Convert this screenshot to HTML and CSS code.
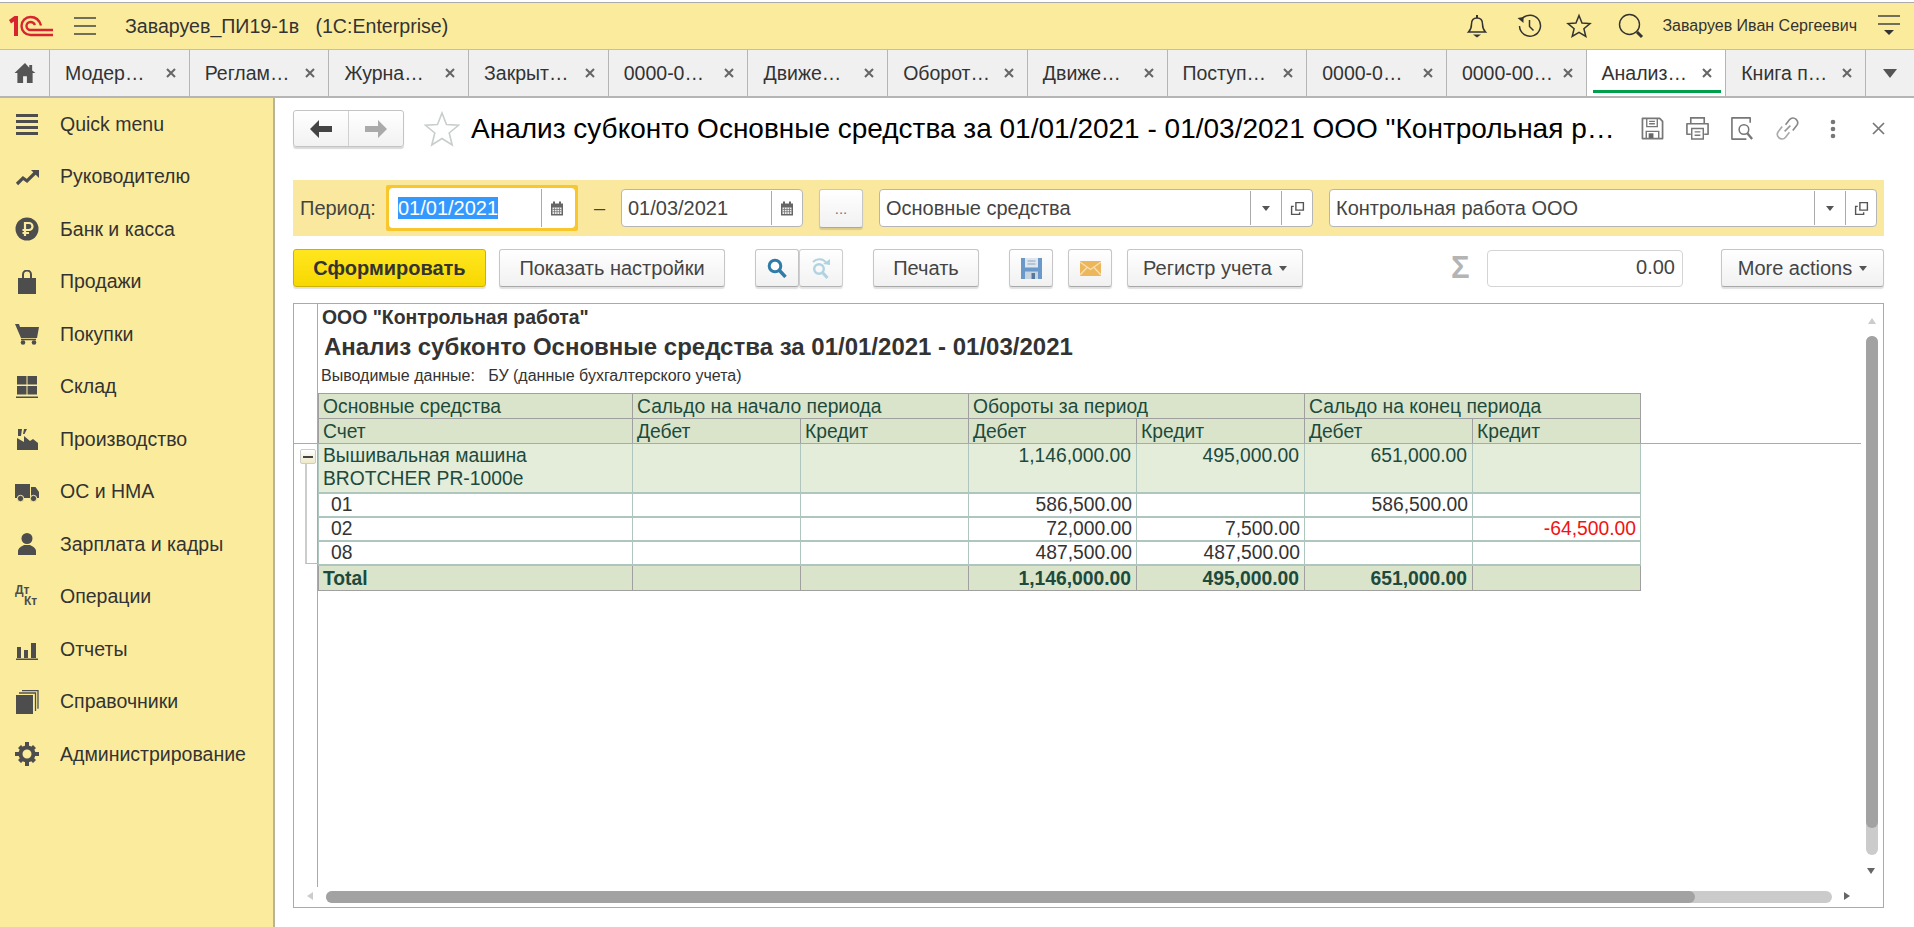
FILE: index.html
```html
<!DOCTYPE html>
<html lang="en">
<head>
  <meta charset="UTF-8" />
  <title>Анализ субконто</title>
  <link rel="stylesheet" href="styles.css">
</head>
<body>

<svg class="defs" width="0" height="0">
  <symbol id="i-cal" viewBox="0 0 14 16">
    <path d="M1 3h12v12H1z" fill="#666"/>
    <path d="M3 1h2v3H3zM9 1h2v3H9z" fill="#666"/>
    <path d="M2.5 7h9v6.5h-9z" fill="#eee"/>
    <path d="M4.5 7v6.5M7 7v6.5M9.5 7v6.5M2.5 9h9M2.5 11.2h9" stroke="#777" stroke-width=".8" fill="none"/>
  </symbol>
  <symbol id="i-open" viewBox="0 0 14 14">
    <path d="M5.5 1.5h7v7h-7z" fill="none" stroke="#555" stroke-width="1.3"/>
    <path d="M3.5 5H1.5v7.5H9V10.5" fill="none" stroke="#555" stroke-width="1.3"/>
  </symbol>
  <symbol id="i-x" viewBox="0 0 10 10">
    <path d="M1 1l8 8M9 1l-8 8" stroke="#666" stroke-width="2" fill="none"/>
  </symbol>
</svg>

<header class="topbar">
  <svg class="logo" width="44" height="22" viewBox="0 0 44 22">
    <path d="M0 5l5.500-4H9v20H5V6.500L2 8.500z" fill="#d9232e"/>
    <path d="M44 20H21.500a9 9 0 0 1 0-18c5.500 0 9 3.500 10.500 8.500" fill="none" stroke="#d9232e" stroke-width="2.400"/>
    <path d="M44 15H21.500a4 4 0 0 1 0-8c2 0 3.500 1 4.500 3" fill="none" stroke="#d9232e" stroke-width="2.400"/>
  </svg>
  <svg class="burger" width="22" height="18" viewBox="0 0 22 18">
    <path d="M0 1h22M0 9h22M0 17h22" stroke="#444" stroke-width="1.4" fill="none"/>
  </svg>
  <div class="app-title">Заваруев_ПИ19-1в&nbsp;&nbsp; (1C:Enterprise)</div>
  <div class="top-icons">
    <svg class="t-bell" width="24" height="26" viewBox="0 0 24 26">
      <path d="M3.500 19c2.500-2.500 3-4 3-8 0-3.500 2-6 5.500-6s5.500 2.500 5.500 6c0 4 .5 5.500 3 8z" fill="none" stroke="#333" stroke-width="1.500"/>
      <path d="M12 2v3" stroke="#333" stroke-width="2"/>
      <path d="M8 21.500h8l-4 3z" fill="#333"/>
    </svg>
    <svg class="t-hist" width="26" height="26" viewBox="0 0 26 26">
      <path d="M5.500 6.500a10.500 10.500 0 1 1-2 6.500" fill="none" stroke="#333" stroke-width="1.500"/>
      <path d="M1.500 5l6-1v6z" fill="#333"/>
      <path d="M13.500 7v6.500l4 4" fill="none" stroke="#333" stroke-width="1.500"/>
    </svg>
    <svg class="t-star" width="26" height="26" viewBox="0 0 26 26">
      <path d="M13 2.500l3 7.500 8 .6-6.100 5.100 1.900 7.800L13 19.300l-6.800 4.200 1.900-7.800L2 10.600l8-.6z" fill="none" stroke="#333" stroke-width="1.500"/>
    </svg>
    <svg class="t-search" width="26" height="26" viewBox="0 0 26 26">
      <circle cx="11.500" cy="11.500" r="10" fill="none" stroke="#333" stroke-width="1.400"/>
      <path d="M19 19l5 5" stroke="#333" stroke-width="3"/>
    </svg>
    <div class="user-name">Заваруев Иван Сергеевич</div>
    <svg class="t-menu" width="22" height="22" viewBox="0 0 22 22">
      <path d="M0 1h22M0 9h22" stroke="#444" stroke-width="1.4" fill="none"/>
      <path d="M6 15h10l-5 5z" fill="#333"/>
    </svg>
  </div>
</header>

<nav class="tabs">
  <div class="tab-home">
    <svg width="22" height="20" viewBox="0 0 22 21"><path d="M11 0L0 10.500h3V21h6v-7h4v7h6V10.500h3L18.500 8V2h-3v3z" fill="#555"/></svg>
  </div>
  <div class="tab"><span>Модер…</span><svg><use href="#i-x"/></svg></div>
  <div class="tab"><span>Реглам…</span><svg><use href="#i-x"/></svg></div>
  <div class="tab"><span>Журна…</span><svg><use href="#i-x"/></svg></div>
  <div class="tab"><span>Закрыт…</span><svg><use href="#i-x"/></svg></div>
  <div class="tab"><span>0000-0…</span><svg><use href="#i-x"/></svg></div>
  <div class="tab"><span>Движе…</span><svg><use href="#i-x"/></svg></div>
  <div class="tab"><span>Оборот…</span><svg><use href="#i-x"/></svg></div>
  <div class="tab"><span>Движе…</span><svg><use href="#i-x"/></svg></div>
  <div class="tab"><span>Поступ…</span><svg><use href="#i-x"/></svg></div>
  <div class="tab"><span>0000-0…</span><svg><use href="#i-x"/></svg></div>
  <div class="tab"><span>0000-00…</span><svg><use href="#i-x"/></svg></div>
  <div class="tab active"><span>Анализ…</span><svg><use href="#i-x"/></svg></div>
  <div class="tab"><span>Книга п…</span><svg><use href="#i-x"/></svg></div>
  <div class="tab-more"><svg width="14" height="9" viewBox="0 0 14 9"><path d="M0 0h14L7 9z" fill="#555"/></svg></div>
</nav>

<div class="main">
  <aside class="sidebar">
    <div class="side-item">
      <svg viewBox="0 0 24 24"><path d="M1 2h22v3H1zM1 8h22v3H1zM1 14h22v3H1zM1 20h22v3H1z" fill="#4d4d4d"/></svg>
      <span>Quick menu</span>
    </div>
    <div class="side-item">
      <svg viewBox="0 0 24 24"><path d="M2 19l6-6 4 3 8-8" fill="none" stroke="#4d4d4d" stroke-width="3.2"/><path d="M16 5h8v8z" fill="#4d4d4d"/></svg>
      <span>Руководителю</span>
    </div>
    <div class="side-item">
      <svg viewBox="0 0 24 24"><circle cx="12" cy="12" r="11.5" fill="#4d4d4d"/><path d="M10 19V6h4a3.500 3.500 0 0 1 0 7H7.500M7.500 16H14" fill="none" stroke="#fbec9d" stroke-width="2.200"/></svg>
      <span>Банк и касса</span>
    </div>
    <div class="side-item">
      <svg viewBox="0 0 24 24"><path d="M3 8h18v16H3z" fill="#4d4d4d"/><path d="M8 11V4.500a4 4 0 0 1 8 0V11" fill="none" stroke="#4d4d4d" stroke-width="2"/></svg>
      <span>Продажи</span>
    </div>
    <div class="side-item">
      <svg viewBox="0 0 24 24"><path d="M0 2h4l1 3h19l-2 11H6z" fill="#4d4d4d"/><circle cx="8" cy="20.500" r="2.300" fill="#4d4d4d"/><circle cx="19" cy="20.500" r="2.300" fill="#4d4d4d"/><path d="M6 17.500h15" stroke="#4d4d4d" stroke-width="1.500"/></svg>
      <span>Покупки</span>
    </div>
    <div class="side-item">
      <svg viewBox="0 0 24 24"><path d="M2 1h9.500v8.500H2zM12.500 1H22v8.500h-9.500zM2 11h9.500v8.500H2zM12.500 11H22v8.500h-9.500zM1 21.500h22V23H1z" fill="#4d4d4d"/></svg>
      <span>Склад</span>
    </div>
    <div class="side-item">
      <svg viewBox="0 0 24 24"><path d="M2 23V11l7 4V9l6 5 3-2 5 4v7zM3 2h4l-1 7H3zM9 2h3L9.500 7H8z" fill="#4d4d4d"/></svg>
      <span>Производство</span>
    </div>
    <div class="side-item">
      <svg viewBox="0 0 24 24"><path d="M0 4h15v14H0zM16 7h4.500l3.500 5v6h-8z" fill="#4d4d4d"/><circle cx="5.500" cy="18.500" r="3.200" fill="#4d4d4d" stroke="#fbec9d"/><circle cx="18.500" cy="18.500" r="3.200" fill="#4d4d4d" stroke="#fbec9d"/></svg>
      <span>ОС и НМА</span>
    </div>
    <div class="side-item">
      <svg viewBox="0 0 24 24"><circle cx="12" cy="6.500" r="5.500" fill="#4d4d4d"/><path d="M3 23v-4c0-3 4-5 6-6h6c2 1 6 3 6 6v4z" fill="#4d4d4d"/></svg>
      <span>Зарплата и кадры</span>
    </div>
    <div class="side-item">
      <div class="dt-kt"><b>Дт</b><b class="kt">Кт</b></div>
      <span>Операции</span>
    </div>
    <div class="side-item">
      <svg viewBox="0 0 24 24"><path d="M2 10h4v11H2zM9 13h4v8H9zM16 6h5v15h-5zM1 21.500h22V23H1z" fill="#4d4d4d"/></svg>
      <span>Отчеты</span>
    </div>
    <div class="side-item">
      <svg viewBox="0 0 24 24"><path d="M1 5h17v19H1z" fill="#4d4d4d"/><path d="M4 3h16.500v18M7 .7h16v18" fill="none" stroke="#4d4d4d" stroke-width="1.300"/></svg>
      <span>Справочники</span>
    </div>
    <div class="side-item">
      <svg viewBox="0 0 24 24"><circle cx="12" cy="12" r="6.500" fill="none" stroke="#4d4d4d" stroke-width="4"/><path d="M10 0h4v4h-4zM10 20h4v4h-4zM0 10h4v4H0zM20 10h4v4h-4zM3 6l3-3 3 3-3 3zM15 18l3-3 3 3-3 3zM15 6l3-3 3 3-3 3zM3 18l3-3 3 3-3 3z" fill="#4d4d4d"/></svg>
      <span>Администрирование</span>
    </div>
  </aside>

  <main class="content">
    <div class="form-head">
      <div class="nav-group">
        <div class="nav-btn">
          <svg width="22" height="18" viewBox="0 0 22 18"><path d="M9 0v6h13v6H9v6L0 9z" fill="#444"/></svg>
        </div>
        <div class="nav-btn">
          <svg width="22" height="18" viewBox="0 0 22 18"><path d="M13 0v6H0v6h13v6l9-9z" fill="#aaa"/></svg>
        </div>
      </div>
      <svg class="fav" width="36" height="36" viewBox="0 0 36 36">
        <path d="M18 2l4.500 11.500 12 .8-9.300 7.700 3 12L18 27.500 7.800 34l3-12-9.300-7.700 12-.8z" fill="#fff" stroke="#c8cdcd" stroke-width="1.600"/>
      </svg>
      <h1 class="form-title">Анализ субконто Основные средства за 01/01/2021 - 01/03/2021 ООО "Контрольная р…</h1>
      <div class="head-icons">
        <svg width="23" height="23" viewBox="0 0 24 24"><path d="M1.500 1.500h18l3 3v18h-21z" fill="none" stroke="#777" stroke-width="1.800" stroke-linejoin="round"/><path d="M6 2v8h11V2M8.500 4.500h6M8.500 7h6" fill="none" stroke="#777" stroke-width="1.400"/><path d="M5.500 22v-7h13v7" fill="none" stroke="#777" stroke-width="1.500"/><path d="M8 17h5v5H8z" fill="#666"/></svg>
        <svg width="25" height="25" viewBox="0 0 26 26"><path d="M6 8V2h14v6" fill="none" stroke="#777" stroke-width="1.700"/><path d="M6 19H2V8h22v11h-4" fill="none" stroke="#777" stroke-width="1.700" stroke-linejoin="round"/><path d="M7 13h12v11H7zM10 16.500h6M10 20h6" fill="none" stroke="#777" stroke-width="1.500"/></svg>
        <svg width="25" height="25" viewBox="0 0 26 26"><path d="M21 7V2H2v22h15" fill="none" stroke="#777" stroke-width="1.700" stroke-linejoin="round"/><circle cx="14.500" cy="14" r="5" fill="none" stroke="#777" stroke-width="1.600"/><path d="M18 18l5 6" stroke="#777" stroke-width="2.400"/></svg>
        <svg width="25" height="25" viewBox="0 0 26 26"><path d="M11 9l4-5c2-2.500 5-2.500 7-.5s2 4.500.5 6.500l-4 5" fill="none" stroke="#888" stroke-width="1.700"/><path d="M15 17l-4 5c-2 2.500-5 2.500-7 .5s-2-4.500-.5-6.500l4-5" fill="none" stroke="#aaa" stroke-width="1.700"/><path d="M10 16l6-6" stroke="#999" stroke-width="1.700"/></svg>
        <svg width="6" height="20" viewBox="0 0 6 20"><circle cx="3" cy="3" r="2.300" fill="#777"/><circle cx="3" cy="10" r="2.300" fill="#777"/><circle cx="3" cy="17" r="2.300" fill="#777"/></svg>
        <svg width="13" height="13" viewBox="0 0 13 13"><path d="M1 1l11 11M12 1L1 12" stroke="#777" stroke-width="1.700" fill="none"/></svg>
      </div>
    </div>

    <div class="band">
      <label class="period-label">Период:</label>
      <div class="focus-ring">
        <div class="field in-focus">
          <div class="field-text"><span class="selected">01/01/2021</span></div>
          <div class="field-btn cal"><svg width="14" height="17"><use href="#i-cal"/></svg></div>
        </div>
      </div>
      <span class="dash">–</span>
      <div class="field date-to">
        <div class="field-text">01/03/2021</div>
        <div class="field-btn cal"><svg width="14" height="17"><use href="#i-cal"/></svg></div>
      </div>
      <div class="btn dots">...</div>
      <div class="field sub-field">
        <div class="field-text">Основные средства</div>
        <div class="field-btn"><i class="caret"></i></div>
        <div class="field-btn open"><svg width="15" height="15"><use href="#i-open"/></svg></div>
      </div>
      <div class="field org-field">
        <div class="field-text">Контрольная работа ООО</div>
        <div class="field-btn"><i class="caret"></i></div>
        <div class="field-btn open"><svg width="15" height="15"><use href="#i-open"/></svg></div>
      </div>
    </div>

    <div class="toolbar">
      <div class="btn btn-primary">Сформировать</div>
      <div class="btn w-settings">Показать настройки</div>
      <div class="btn icon-btn m-search">
        <svg width="20" height="20" viewBox="0 0 20 20"><circle cx="8" cy="8" r="5.800" fill="#fff" stroke="#2f7ca8" stroke-width="3"/><path d="M12.500 12.500l6 6.500" stroke="#2f7ca8" stroke-width="3.400"/></svg>
      </div>
      <div class="btn icon-btn pale">
        <svg width="22" height="22" viewBox="0 0 22 22"><circle cx="9" cy="12" r="4.800" fill="none" stroke="#a3ccdc" stroke-width="2.400"/><path d="M12.500 15.500l5 5.500" stroke="#a3ccdc" stroke-width="3"/><path d="M3 5c4-4 10-3.500 13 .5" fill="none" stroke="#a3ccdc" stroke-width="2"/><path d="M13 7l7 1 0-6z" fill="#a3ccdc"/></svg>
      </div>
      <div class="btn w-print">Печать</div>
      <div class="btn icon-btn m-save">
        <svg width="21" height="21" viewBox="0 0 21 21"><path d="M0 0h21v21H0z" fill="#6a98c8"/><path d="M4 0h13v9.500H4z" fill="#dfe6ee"/><path d="M6.500 3h8M6.500 6h8" stroke="#8aa4bf"/><path d="M4 13.500h13V21H4z" fill="#c8d4e0"/><path d="M10.500 15h3.500v6h-3.500z" fill="#56789c"/></svg>
      </div>
      <div class="btn icon-btn m-mail">
        <svg width="21" height="15" viewBox="0 0 21 15"><path d="M0 0h21v15H0z" fill="#ecb65c"/><path d="M0 1l10.500 7.500L21 1M0 14l7.500-8M21 14l-7.500-8" fill="none" stroke="#f9e0ae" stroke-width="1.300"/></svg>
      </div>
      <div class="btn w-reg">Регистр учета <i class="caret"></i></div>
      <div class="sigma">Σ</div>
      <div class="sum-field">0.00</div>
      <div class="btn w-more">More actions <i class="caret"></i></div>
    </div>

    <section class="report">
      <div class="sheet">
        <div class="rep-org">ООО "Контрольная работа"</div>
        <div class="rep-title">Анализ субконто Основные средства за 01/01/2021 - 01/03/2021</div>
        <div class="rep-note">Выводимые данные:&nbsp;&nbsp; БУ (данные бухгалтерского учета)</div>
        <table class="rep-table">
          <colgroup>
            <col class="c-first"><col class="c-num"><col class="c-num"><col class="c-num"><col class="c-num"><col class="c-num"><col class="c-num">
          </colgroup>
          <tr class="head h1">
            <td>Основные средства</td>
            <td colspan="2">Сальдо на начало периода</td>
            <td colspan="2">Обороты за период</td>
            <td colspan="2">Сальдо на конец периода</td>
          </tr>
          <tr class="head h2">
            <td>Счет</td><td>Дебет</td><td>Кредит</td><td>Дебет</td><td>Кредит</td><td>Дебет</td><td>Кредит</td>
          </tr>
          <tr class="group">
            <td>Вышивальная машина<br>BROTCHER PR-1000e</td>
            <td></td><td></td>
            <td class="n">1,146,000.00</td><td class="n">495,000.00</td><td class="n">651,000.00</td><td></td>
          </tr>
          <tr class="row">
            <td class="acc">01</td><td></td><td></td>
            <td class="n">586,500.00</td><td></td><td class="n">586,500.00</td><td></td>
          </tr>
          <tr class="row">
            <td class="acc">02</td><td></td><td></td>
            <td class="n">72,000.00</td><td class="n">7,500.00</td><td></td><td class="n neg">-64,500.00</td>
          </tr>
          <tr class="row">
            <td class="acc">08</td><td></td><td></td>
            <td class="n">487,500.00</td><td class="n">487,500.00</td><td></td><td></td>
          </tr>
          <tr class="total">
            <td>Total</td><td></td><td></td>
            <td class="n">1,146,000.00</td><td class="n">495,000.00</td><td class="n">651,000.00</td><td></td>
          </tr>
        </table>
      </div>

      <div class="freeze-line"></div>
      <div class="tree-line"></div>
      <div class="tree-toggle"></div>

      <i class="arrow up"></i>
      <div class="vtrack"><div class="vthumb"></div></div>
      <i class="arrow down"></i>
      <i class="arrow left"></i>
      <div class="htrack"><div class="hthumb"></div></div>
      <i class="arrow right"></i>
    </section>
  </main>
</div>

</body>
</html>
```

FILE: styles.css
```css
:root {
  --yellow: #fbec9d;
  --band: #fae89f;
  --text: #333;
  --green-text: #1d4a3c;
}
* {
  margin: 0;
  padding: 0;
  box-sizing: border-box;
}
html, body {
  height: 927px;
  overflow: hidden;
}
body {
  display: flex;
  flex-direction: column;
  padding-top: 2px;
  background: #fff;
  color: var(--text);
  font-family: "Liberation Sans", Arial, sans-serif;
  font-size: 20px;
}
.defs {
  position: absolute;
}

/* top bar */
.topbar {
  display: flex;
  align-items: center;
  height: 48px;
  flex: none;
  background: var(--yellow);
  border-top: 1px solid #aaa;
  border-bottom: 1px solid #c9c28d;
}
.logo {
  margin-left: 9px;
}
.burger {
  margin-left: 21px;
}
.app-title {
  margin-left: 29px;
  font-size: 19.6px;
}
.top-icons {
  display: flex;
  align-items: center;
  margin-left: auto;
  padding-right: 14px;
}
.t-bell { margin-right: 27px; }
.t-hist { margin-right: 24px; }
.t-star { margin-right: 26px; }
.t-search { margin-right: 18px; }
.user-name {
  font-size: 16px;
  margin-right: 21px;
}

/* tabs */
.tabs {
  display: flex;
  flex: none;
  height: 48px;
  background: #f0f0f0;
  border-bottom: 2px solid #b5b5b5;
}
.tab-home {
  width: 50px;
  display: flex;
  align-items: center;
  justify-content: center;
  border-right: 1px solid #b5b5b5;
}
.tab {
  position: relative;
  width: 139.7px;
  display: flex;
  align-items: center;
  padding-left: 15px;
  border-right: 1px solid #b5b5b5;
  font-size: 19.5px;
  white-space: nowrap;
}
.tab svg {
  position: absolute;
  right: 13px;
  top: 18px;
  width: 10px;
  height: 10px;
}
.tab.active {
  background: #fff;
}
.tab.active::after {
  content: "";
  position: absolute;
  left: 6px;
  right: 4px;
  bottom: 3px;
  height: 3px;
  background: #00a04a;
}
.tab-more {
  flex: 1;
  display: flex;
  align-items: center;
  justify-content: center;
}

/* layout */
.main {
  display: flex;
  flex: 1;
  min-height: 0;
}
.sidebar {
  width: 275px;
  flex: none;
  background: var(--yellow);
  border-right: 2px solid #b8b49a;
}
.side-item {
  display: flex;
  align-items: center;
  height: 52.5px;
  padding-left: 15px;
  font-size: 19.5px;
}
.side-item svg,
.dt-kt {
  width: 24px;
  height: 24px;
  flex: none;
  margin-right: 21px;
}
.dt-kt {
  display: flex;
  flex-direction: column;
  font-size: 12px;
  line-height: 11px;
  color: #4d4d4d;
}
.dt-kt .kt {
  margin-left: 9px;
}
.content {
  flex: 1;
  padding: 12px 30px 0 18px;
  min-width: 0;
}

/* form header */
.form-head {
  display: flex;
  align-items: center;
  height: 37px;
}
.nav-group {
  display: flex;
  width: 111px;
  height: 37px;
  flex: none;
  border: 1px solid #c4c4c4;
  border-radius: 3px;
  background: linear-gradient(#fff, #f2f2f2);
  box-shadow: 0 2px 1px rgba(0, 0, 0, .15);
}
.nav-btn {
  flex: 1;
  display: flex;
  align-items: center;
  justify-content: center;
}
.nav-btn + .nav-btn {
  border-left: 1px solid #d0d0d0;
}
.fav {
  margin-left: 20px;
  flex: none;
}
.form-title {
  margin-left: 11px;
  font-size: 28px;
  font-weight: normal;
  color: #000;
  white-space: nowrap;
}
.head-icons {
  display: grid;
  grid-template-columns: repeat(6, 45.2px);
  justify-items: center;
  align-items: center;
  margin-left: auto;
  margin-right: -16.6px;
  flex: none;
}

/* period band */
.band {
  display: flex;
  align-items: center;
  height: 56px;
  margin-top: 33px;
  padding-left: 7px;
  background: var(--band);
}
.period-label {
  width: 86px;
  font-size: 20px;
  color: #444;
}
.focus-ring {
  width: 192px;
  height: 46px;
  padding: 3px;
  background: #f8c72e;
  border-radius: 2px;
}
.field {
  display: flex;
  align-items: center;
  height: 38px;
  padding: 1px 0;
  background: #fff;
  border: 1px solid #b5b5b5;
  border-radius: 4px;
  font-size: 20px;
  color: #444;
}
.in-focus {
  height: 40px;
  border: none;
}
.field-text {
  flex: 1;
  padding-left: 6px;
  white-space: nowrap;
}
.in-focus .field-text {
  padding-left: 9px;
}
.selected {
  background: #3399ff;
  color: #fff;
}
.field-btn {
  display: flex;
  align-items: center;
  justify-content: center;
  width: 31px;
  height: 100%;
  border-left: 1px solid #aaa;
}
.in-focus .field-btn {
  width: 34px;
  padding-right: 4px;
}
.dash {
  width: 43px;
  text-align: center;
  color: #444;
}
.date-to { width: 182px; }
.sub-field { width: 434px; margin-left: 16px; }
.org-field { width: 548px; margin-left: 16px; }
.caret {
  display: inline-block;
  width: 0;
  height: 0;
  border-left: 4px solid transparent;
  border-right: 4px solid transparent;
  border-top: 5px solid #555;
}

/* buttons */
.btn {
  display: flex;
  align-items: center;
  justify-content: center;
  height: 38px;
  flex: none;
  background: linear-gradient(#fff, #f1f1f1);
  border: 1px solid #c6c6c6;
  border-bottom-color: #a8a8a8;
  border-radius: 3px;
  box-shadow: 0 2px 1px rgba(0, 0, 0, .12);
  font-size: 20px;
  color: #444;
}
.dots {
  width: 44px;
  height: 39px;
  margin-left: 16px;
  font-size: 15px;
  color: #777;
}
.toolbar {
  display: flex;
  align-items: center;
  height: 38px;
  margin-top: 13px;
}
.btn-primary {
  width: 193px;
  background: linear-gradient(#ffe61f, #f7d800);
  border-color: #cdb300;
  font-weight: bold;
  color: #333;
}
.w-settings { width: 226px; margin-left: 13px; }
.icon-btn { width: 44px; }
.m-search { margin-left: 30px; }
.pale { opacity: .85; }
.w-print { width: 106px; margin-left: 30px; }
.m-save { margin-left: 30px; }
.m-mail { margin-left: 15px; }
.w-reg { width: 176px; margin-left: 15px; }
.w-reg .caret, .w-more .caret { margin-left: 7px; }
.sigma {
  margin-left: 148px;
  width: 36px;
  font-size: 31px;
  color: #b4b4b4;
  font-weight: bold;
}
.sum-field {
  width: 196px;
  height: 37px;
  line-height: 33px;
  text-align: right;
  padding-right: 7px;
  border: 1px solid #d4d4d4;
  border-radius: 4px;
  font-size: 20px;
  color: #444;
}
.w-more { width: 163px; margin-left: 38px; }

/* report */
.report {
  position: relative;
  height: 605px;
  margin-top: 16px;
  border: 1px solid #aaa;
}
.sheet {
  height: 583px;
  margin-left: 23px;
  border-left: 1px solid #aaa;
}
.rep-org {
  height: 26px;
  line-height: 26px;
  padding-left: 4px;
  font-size: 19.4px;
  font-weight: bold;
}
.rep-title {
  height: 33px;
  line-height: 33px;
  padding-left: 6px;
  font-size: 24px;
  font-weight: bold;
}
.rep-note {
  height: 30px;
  line-height: 25px;
  padding-left: 3px;
  font-size: 16px;
}
.rep-table {
  border-collapse: collapse;
  table-layout: fixed;
  width: 1322px;
  color: var(--green-text);
  font-size: 19.3px;
  line-height: 22px;
}
.c-first { width: 314px; }
.c-num { width: 168px; }
.rep-table td {
  padding: 0 5px 0 4px;
  border: 1px solid #aec6be;
  vertical-align: top;
  white-space: nowrap;
}
.head td, .total td {
  padding-top: 2px;
  background: #d9e4cb;
  border-color: #a0a0a0;
  vertical-align: middle;
}
.h1 td { height: 25px; }
.h2 td { height: 25px; }
.rep-table .group td {
  height: 49px;
  padding-top: 1px;
  line-height: 22.5px;
  background: #e3edda;
  border-bottom-width: 2px;
}
.row td {
  height: 24px;
  color: var(--text);
  border-bottom-width: 2px;
}
.total td {
  height: 26px;
  font-weight: bold;
}
.n { text-align: right; }
.rep-table .row .n { padding-right: 4px; }
.row .neg { color: #f01414; }
.rep-table .acc { padding-left: 12px; }

/* things lying over the sheet */
.freeze-line {
  position: absolute;
  left: 0;
  top: 139px;
  width: 1567px;
  height: 1px;
  background: #aaa;
}
.tree-toggle {
  position: absolute;
  left: 6px;
  top: 145px;
  width: 16px;
  height: 15px;
  background: linear-gradient(#fff, #eee9c8);
  border: 1px solid #ccc;
  border-radius: 2px;
}
.tree-toggle::after {
  content: "";
  position: absolute;
  left: 2px;
  right: 2px;
  top: 6px;
  height: 2px;
  background: #444;
}
.tree-line {
  position: absolute;
  left: 11px;
  top: 158px;
  width: 13px;
  height: 102px;
  border-left: 2px solid #ccc;
  border-bottom: 1px solid #bbb;
}
.vtrack {
  position: absolute;
  left: 1572px;
  top: 32px;
  width: 12px;
  height: 519px;
  background: #cbcbcb;
  border-radius: 6px;
}
.vthumb {
  height: 492px;
  background: #a2a2a2;
  border-radius: 6px;
}
.htrack {
  position: absolute;
  left: 32px;
  top: 587px;
  width: 1506px;
  height: 12px;
  background: #cbcbcb;
  border-radius: 6px;
}
.hthumb {
  width: 1369px;
  height: 12px;
  background: #a2a2a2;
  border-radius: 6px;
}
.arrow {
  position: absolute;
  width: 0;
  height: 0;
  border-style: solid;
  border-color: transparent;
}
.arrow.up {
  left: 1574px;
  top: 14px;
  border-width: 0 4px 6px;
  border-bottom-color: #ccc;
}
.arrow.down {
  left: 1573px;
  top: 564px;
  border-width: 6px 4.5px 0;
  border-top-color: #666;
}
.arrow.left {
  left: 13px;
  top: 588px;
  border-width: 4.5px 6px 4.5px 0;
  border-right-color: #ccc;
}
.arrow.right {
  left: 1550px;
  top: 588px;
  border-width: 4.5px 0 4.5px 6px;
  border-left-color: #666;
}
```
